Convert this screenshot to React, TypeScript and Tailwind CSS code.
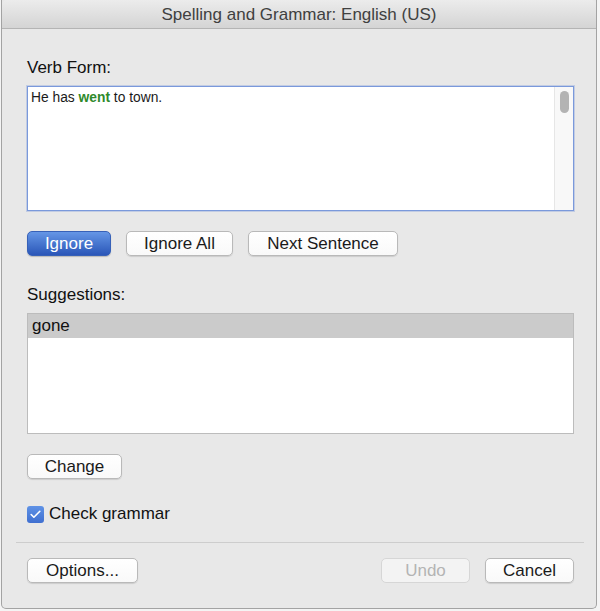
import { Check } from "lucide-react";

const FONT = { fontFamily: '"Liberation Sans", Arial, sans-serif' };

function MacButton({
  children,
  width,
  primary,
  disabled,
}: {
  children: React.ReactNode;
  width: string;
  primary?: boolean;
  disabled?: boolean;
}) {
  const base = "h-[25px] rounded-[5px] text-[17px] leading-[23px] text-center border shrink-0";
  if (primary) {
    return (
      <button
        type="button"
        className={`${base} ${width} text-white border-[#3761b8] bg-gradient-to-b from-[#6596e6] to-[#2b56b8] shadow-[0_1px_1px_rgba(0,0,0,0.2)]`}
      >
        {children}
      </button>
    );
  }
  if (disabled) {
    return (
      <button
        type="button"
        disabled
        className={`${base} ${width} text-[#b4b4b4] border-[#d6d6d6] bg-[#f3f3f3]`}
      >
        {children}
      </button>
    );
  }
  return (
    <button
      type="button"
      className={`${base} ${width} text-[#1a1a1a] border-[#b9b9b9] bg-gradient-to-b from-white to-[#f9f9f9] shadow-[0_1px_1px_rgba(0,0,0,0.12)]`}
    >
      {children}
    </button>
  );
}

export default function App() {
  return (
    <div className="w-[600px] h-[611px] bg-[#f4f4f4] pl-[1px] overflow-hidden" style={FONT}>
      <div className="w-[596px] h-[609px] flex flex-col border-x border-b border-[#a3a3a3] rounded-b-[5px] bg-[#e8e8e8] overflow-hidden">
        {/* title bar */}
        <div className="h-[29px] shrink-0 flex items-center justify-center border-b border-[#b4b4b4] bg-gradient-to-b from-[#ececec] to-[#d4d4d4] rounded-t-[5px]">
          <span className="text-[17px] text-[#404040] leading-none">Spelling and Grammar: English (US)</span>
        </div>

        <div className="flex flex-col pl-[25px] pr-[22px]">
          <div className="mt-[29px] text-[17px] leading-[20px] text-[#111]">Verb Form:</div>

          <div className="mt-[8px] h-[125px] flex border border-[#7a99db] bg-white shadow-[0_0_0_1px_rgba(122,153,219,0.35)]">
            <div className="flex-1 pl-[3px] pt-[3px] text-[13.8px] leading-[16px] text-[#1a1a1a]">
              He has <span className="font-bold text-[#2f8a2c]">went</span> to town.
            </div>
            <div className="w-[19px] border-l border-[#e6e6e6] bg-[#f8f8f8] flex justify-center pt-[4px]">
              <div className="w-[9px] h-[22px] rounded-full bg-[#b3b3b3]" />
            </div>
          </div>

          <div className="mt-[20px] flex gap-[15px]">
            <MacButton width="w-[84px]" primary>
              Ignore
            </MacButton>
            <MacButton width="w-[107px]">Ignore All</MacButton>
            <MacButton width="w-[150px]">Next Sentence</MacButton>
          </div>

          <div className="mt-[29px] text-[17px] leading-[20px] text-[#111]">Suggestions:</div>

          <div className="mt-[8px] h-[121px] border border-[#bcbcbc] bg-white">
            <div className="h-[24px] bg-[#cbcbcb] pl-[4px] text-[17px] leading-[24px] text-[#111]">gone</div>
          </div>

          <div className="mt-[20px] flex">
            <MacButton width="w-[95px]">Change</MacButton>
          </div>

          <div className="mt-[25px] h-[20px] flex items-center gap-[5px]">
            <div className="w-[17px] h-[17px] rounded-[3px] bg-gradient-to-b from-[#5f92e6] to-[#3f6fd0] flex items-center justify-center">
              <Check className="w-[13px] h-[13px] text-white" strokeWidth={3} />
            </div>
            <span className="text-[17px] leading-[20px] text-[#111]">Check grammar</span>
          </div>

          <div className="mt-[18px] -ml-[11px] -mr-[10px] h-px bg-[#cdcdcd]" />

          <div className="mt-[15px] flex">
            <MacButton width="w-[111px]">Options...</MacButton>
            <div className="flex-1" />
            <MacButton width="w-[89px]" disabled>
              Undo
            </MacButton>
            <div className="w-[15px]" />
            <MacButton width="w-[89px]">Cancel</MacButton>
          </div>
        </div>
      </div>
    </div>
  );
}
